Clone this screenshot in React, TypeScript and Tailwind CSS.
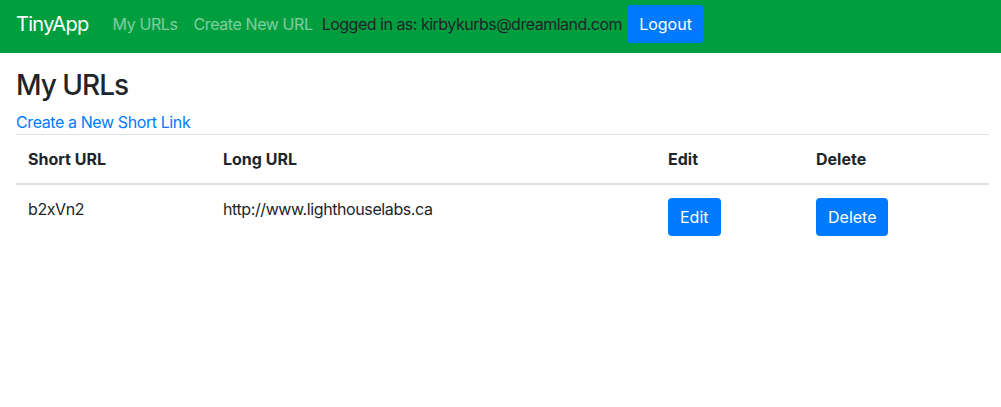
import React from "react";

export default function App() {
  return (
    <div className="min-h-[407px] bg-white text-[#212529] text-base leading-6" style={{ fontFamily: "Inter, 'Liberation Sans', sans-serif" }}>
      <nav className="flex h-[53px] items-center bg-[#009e3f] px-4 pb-[5px]">
        <a className="mr-4 py-[5px] text-[20px] leading-[30px] tracking-[-0.7px] text-white">TinyApp</a>
        <a className="px-2 py-2 tracking-[-0.4px] text-white/50">My URLs</a>
        <a className="px-2 py-2 tracking-[-0.4px] text-white/50">Create New URL</a>
        <span className="ml-px tracking-[-0.5px] text-[#212529]">Logged in as: kirbykurbs@dreamland.com</span>
        <button className="ml-[5px] h-[38px] rounded bg-[#007bff] px-3 text-white">Logout</button>
      </nav>
      <main className="ml-4 mr-3 mt-[15px]">
        <h3 className="mb-2 text-[28px] font-medium leading-[34px] tracking-[-1px]">My URLs</h3>
        <a className="tracking-[-0.4px] text-[#007bff]">Create a New Short Link</a>
        <table className="w-full border-collapse text-left">
          <thead>
            <tr className="border-t border-[#dee2e6]">
              <th className="w-[195px] border-b-2 border-[#dee2e6] p-3 font-bold">Short URL</th>
              <th className="w-[445px] border-b-2 border-[#dee2e6] p-3 font-bold">Long URL</th>
              <th className="w-[148px] border-b-2 border-[#dee2e6] p-3 font-bold">Edit</th>
              <th className="border-b-2 border-[#dee2e6] p-3 font-bold">Delete</th>
            </tr>
          </thead>
          <tbody>
            <tr>
              <td className="p-3 align-top tracking-[-0.4px]">b2xVn2</td>
              <td className="p-3 align-top tracking-[-0.4px]">http://www.lighthouselabs.ca</td>
              <td className="px-3 pb-3 pt-[13px] align-top">
                <button className="h-[38px] rounded bg-[#007bff] px-3 text-white">Edit</button>
              </td>
              <td className="px-3 pb-3 pt-[13px] align-top">
                <button className="h-[38px] rounded bg-[#007bff] px-3 text-white">Delete</button>
              </td>
            </tr>
          </tbody>
        </table>
      </main>
    </div>
  );
}
